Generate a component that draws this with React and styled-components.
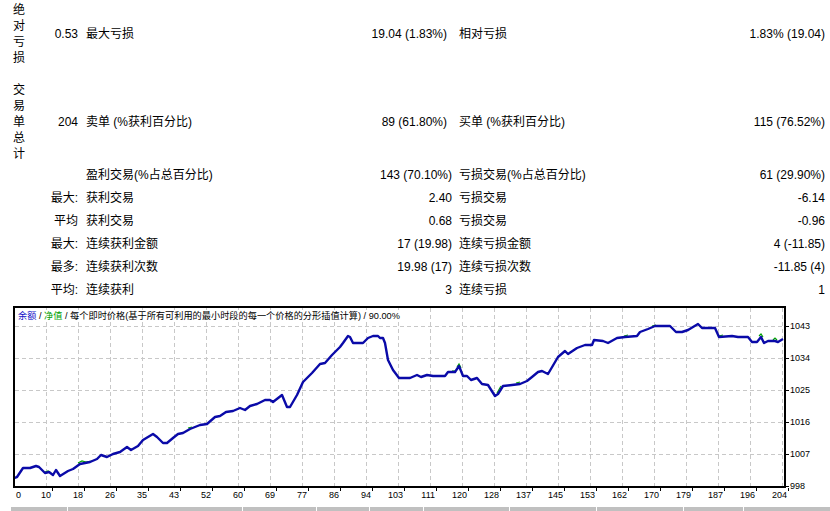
import React from "react";
import styled, { createGlobalStyle } from "styled-components";

const GlobalStyle = createGlobalStyle`
  body {
    margin: 0;
    background: #ffffff;
    font-family: "Liberation Sans", "Noto Sans CJK SC", sans-serif;
    color: #000;
  }
`;

// 统计表数据
const groupRows = [
  {
    group: "绝对亏损",
    gap: 0,
    cells: ["0.53", "最大亏损", "19.04 (1.83%)", "相对亏损", "1.83% (19.04)"],
  },
  {
    group: "交易单总计",
    gap: 16,
    cells: ["204", "卖单 (%获利百分比)", "89 (61.80%)", "买单 (%获利百分比)", "115 (76.52%)"],
  },
];

const plainRows = [
  ["", "盈利交易(%占总百分比)", "143 (70.10%)", "亏损交易(%占总百分比)", "61 (29.90%)"],
  ["最大:", "获利交易", "2.40", "亏损交易", "-6.14"],
  ["平均", "获利交易", "0.68", "亏损交易", "-0.96"],
  ["最大:", "连续获利金额", "17 (19.98)", "连续亏损金额", "4 (-11.85)"],
  ["最多:", "连续获利次数", "19.98 (17)", "连续亏损次数", "-11.85 (4)"],
  ["平均:", "连续获利", "3", "连续亏损", "1"],
];

const xLabels = [10, 18, 26, 35, 43, 52, 60, 69, 77, 86, 94, 103, 111, 120, 128, 137, 145, 153, 162, 170, 179, 187, 196, 204];
const yLabels = [1043, 1034, 1025, 1016, 1007, 998];
const footerSegments = [56, 174, 73, 52, 53, 85, 86, 86, 59, 86];

// 余额曲线 (页面坐标)
const balance = [
  [14, 478], [17, 477], [23, 468], [30, 468], [36, 466], [39, 467], [45, 473], [49, 472], [53, 475], [56, 470],
  [60, 476], [68, 471], [73, 469], [80, 464], [90, 462], [97, 459], [101, 455], [107, 457], [113, 454], [120, 452],
  [127, 447], [131, 450], [138, 446], [143, 440], [153, 434], [157, 437], [163, 443], [167, 443], [173, 438], [178, 434],
  [183, 433], [190, 429], [200, 425], [207, 424], [215, 417], [220, 416], [226, 412], [233, 411], [240, 408], [245, 410],
  [250, 406], [257, 404], [265, 400], [270, 400], [273, 402], [282, 395], [287, 407], [290, 407], [297, 395], [303, 382],
  [312, 373], [320, 364], [325, 363], [332, 355], [340, 347], [343, 343], [348, 336], [350, 337], [353, 343], [363, 343],
  [368, 338], [373, 336], [378, 336], [380, 338], [383, 338], [385, 343], [388, 360], [393, 370], [399, 378], [410, 378],
  [417, 375], [421, 377], [427, 375], [433, 376], [445, 376], [448, 372], [455, 372], [459, 366], [463, 376], [467, 376],
  [471, 380], [477, 378], [482, 384], [488, 385], [495, 396], [498, 394], [503, 386], [512, 385], [520, 384], [527, 381],
  [532, 377], [538, 372], [542, 371], [548, 374], [558, 357], [565, 351], [568, 354], [577, 348], [585, 345], [592, 345],
  [594, 340], [603, 341], [608, 343], [617, 338], [625, 337], [637, 336], [640, 332], [648, 329], [655, 326], [670, 326],
  [676, 332], [682, 332], [688, 330], [698, 324], [702, 328], [715, 328], [719, 337], [732, 336], [738, 337], [748, 337],
  [752, 342], [757, 342], [761, 337], [764, 343], [768, 341], [775, 341], [778, 342], [783, 339],
];

// 净值的小突起
const equity = [
  [[45, 472], [48, 471], [51, 473]],
  [[78, 463], [82, 461], [86, 462], [92, 461]],
  [[188, 428], [192, 427]],
  [[452, 371], [456, 371]],
  [[457, 367], [459, 364], [461, 368]],
  [[497, 393], [501, 386]],
  [[516, 383], [520, 382]],
  [[624, 336], [628, 335]],
  [[652, 326], [656, 325]],
  [[719, 336], [723, 335]],
  [[759, 336], [761, 334], [763, 337]],
  [[773, 340], [775, 338], [777, 340]],
];

const toPoints = (pts) => pts.map(([x, y]) => `${x - 15},${y - 308}`).join(" ");

const App = () => {
  return (
    <Page>
      <GlobalStyle />
      <Stats>
        {groupRows.map((row, i) => (
          <Row key={row.group} $gap={row.gap} $first={i === 0}>
            <GroupLabel>{row.group}</GroupLabel>
            <Value>{row.cells[0]}</Value>
            <Label $indent={6}>{row.cells[1]}</Label>
            <Value $inset={7}>{row.cells[2]}</Value>
            <Label $indent={5}>{row.cells[3]}</Label>
            <Value $inset={5}>{row.cells[4]}</Value>
          </Row>
        ))}
        {plainRows.map((cells, i) => (
          <Row key={i} $gap={i === 0 ? 2 : 0} $short>
            <span />
            <Value>{cells[0]}</Value>
            <Label $indent={6}>{cells[1]}</Label>
            <Value>{cells[2]}</Value>
            <Label $indent={5}>{cells[3]}</Label>
            <Value $inset={5}>{cells[4]}</Value>
          </Row>
        ))}
      </Stats>

      <Chart>
        <Plot>
          <svg width="769" height="178" style={{ display: "block" }}>
            {xLabels.map((_, k) => (
              <line
                key={"v" + k}
                x1={32 * (k + 1) - 0.5}
                x2={32 * (k + 1) - 0.5}
                y1="0"
                y2="178"
                stroke="#c8c8c8"
                strokeDasharray="4 3"
              />
            ))}
            {[0, 1, 2, 3, 4].map((k) => (
              <line
                key={"h" + k}
                x1="0"
                x2="769"
                y1={18.5 + 32 * k}
                y2={18.5 + 32 * k}
                stroke="#c8c8c8"
                strokeDasharray="4 3"
              />
            ))}
            {equity.map((seg, i) => (
              <polyline key={"e" + i} points={toPoints(seg)} fill="none" stroke="#00a000" strokeWidth="1.2" />
            ))}
            <polyline
              points={toPoints(balance)}
              fill="none"
              stroke="#0a0aa8"
              strokeWidth="2.4"
              strokeLinejoin="round"
            />
          </svg>
          <Legend>
            <LegendPart $color="#1010c8">余额</LegendPart> / <LegendPart $color="#00a000">净值</LegendPart> / 每个即时价格(基于所有可利用的最小时段的每一个价格的分形插值计算) / 90.00%
          </Legend>
        </Plot>
        <YAxis>
          {yLabels.map((v) => (
            <YTick key={v}>{v}</YTick>
          ))}
        </YAxis>
        <XAxis>
          <XTick $first>0</XTick>
          {xLabels.map((v) => (
            <XTick key={v}>{v}</XTick>
          ))}
        </XAxis>
      </Chart>

      <Footer>
        {footerSegments.map((w, i) => (
          <FooterSegment key={i} $width={w} />
        ))}
      </Footer>
    </Page>
  );
};

export default App;

const Page = styled.div`
  width: 830px;
  height: 511px;
  overflow: hidden;
  font-size: 12px;
`;

const Stats = styled.div`
  display: flex;
  flex-direction: column;
`;

const Row = styled.div`
  display: grid;
  grid-template-columns: 30px 50px 200px 174px 1fr 186px;
  align-items: center;
  margin-top: ${(p) => p.$gap}px;
  padding-top: ${(p) => (p.$first ? 2 : 0)}px;
  height: ${(p) => (p.$short ? "23px" : "auto")};
  line-height: 15px;
`;

const GroupLabel = styled.div`
  width: 12px;
  margin-left: 13px;
  line-height: 16px;
  word-break: break-all;
`;

const Value = styled.div`
  text-align: right;
  white-space: nowrap;
  padding-right: ${(p) => p.$inset ?? 2}px;
`;

const Label = styled.div`
  white-space: nowrap;
  padding-left: ${(p) => p.$indent}px;
`;

const Chart = styled.div`
  display: grid;
  grid-template-columns: 773px 1fr;
  grid-template-rows: 182px 12px;
  margin: 4px 0 0 13px;
  font-size: 9px;
`;

const Plot = styled.div`
  position: relative;
  grid-column: 1;
  grid-row: 1;
  height: 182px;
  box-sizing: border-box;
  border: 2px solid #000;
`;

const Legend = styled.div`
  position: absolute;
  top: 2px;
  left: 2px;
  padding: 0 1px;
  background: #fff;
  line-height: 12px;
  font-size: 9.2px;
  white-space: nowrap;
`;

const LegendPart = styled.span`
  color: ${(p) => p.$color};
`;

const YAxis = styled.div`
  grid-column: 2;
  grid-row: 1 / span 2;
  display: flex;
  flex-direction: column;
  padding-top: 4px;
`;

const YTick = styled.div`
  position: relative;
  height: 32px;
  flex: 0 0 32px;
  display: flex;
  align-items: center;
  padding-left: 4px;
  &::before {
    content: "";
    position: absolute;
    left: 0;
    top: 50%;
    width: 3px;
    height: 1px;
    background: #000;
  }
`;

const XAxis = styled.div`
  grid-column: 1;
  grid-row: 2;
  display: flex;
  padding-left: 1px;
  height: 12px;
  line-height: 12px;
  padding-top: 1px;
`;

const XTick = styled.div`
  position: relative;
  flex: 0 0 ${(p) => (p.$first ? "0px" : "32px")};
  text-align: ${(p) => (p.$first ? "left" : "right")};
  padding: ${(p) => (p.$first ? "0 0 0 2px" : "0 2px 0 0")};
  box-sizing: border-box;
  white-space: nowrap;
  &::after {
    content: "";
    display: ${(p) => (p.$first ? "none" : "block")};
    position: absolute;
    right: 0;
    top: -1px;
    width: 1px;
    height: 3px;
    background: #000;
  }
`;

const Footer = styled.div`
  display: flex;
  gap: 1px;
  margin-top: 7px;
  padding-left: 11px;
  height: 4px;
`;

const FooterSegment = styled.div`
  flex: 0 0 ${(p) => p.$width}px;
  background: #c0c0c0;
`;
